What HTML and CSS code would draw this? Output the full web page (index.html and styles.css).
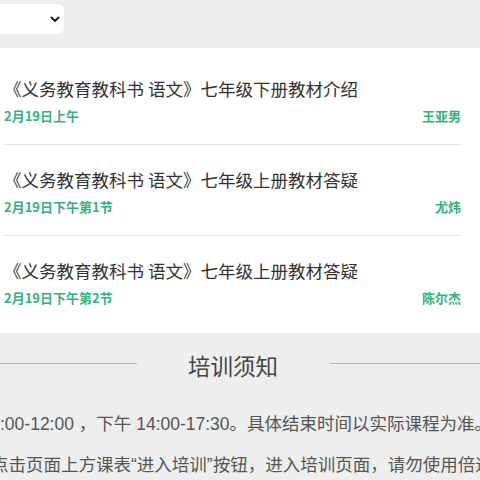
FILE: index.html
```html
<!DOCTYPE html>
<html lang="zh-CN">
<head>
	<meta charset="UTF-8" />
	<meta name="viewport" content="width=device-width, initial-scale=1.0"/>
	<title>培训课表</title>
	<link rel="stylesheet" href="styles.css">
</head>
<body>
<div class="page">
	<div class="select-box">
		<svg class="chevron" width="10" height="7" viewBox="0 0 10 7"><path d="M1.5 1.5 L5 5 L8.5 1.5" fill="none" stroke="#222" stroke-width="2" stroke-linecap="round" stroke-linejoin="round"/></svg>
	</div>

	<div class="course-card">
		<div class="course-row">
			<p class="course-title">《义务教育教科书 语文》七年级下册教材介绍</p>
			<div class="course-meta">
				<span>2月19日上午</span>
				<span>王亚男</span>
			</div>
		</div>
		<div class="course-row">
			<p class="course-title">《义务教育教科书 语文》七年级上册教材答疑</p>
			<div class="course-meta">
				<span>2月19日下午第1节</span>
				<span>尤炜</span>
			</div>
		</div>
		<div class="course-row last">
			<p class="course-title">《义务教育教科书 语文》七年级上册教材答疑</p>
			<div class="course-meta">
				<span>2月19日下午第2节</span>
				<span>陈尔杰</span>
			</div>
		</div>
	</div>

	<div class="section-head">
		<span class="line left"></span>
		<h3>培训须知</h3>
		<span class="line right"></span>
	</div>

	<p class="notice">:00-12:00 ，下午 14:00-17:30。具体结束时间以实际课程为准。</p>
	<p class="notice shifted">点击页面上方课表“进入培训”按钮，进入培训页面，请勿使用倍速</p>
</div>
</body>
</html>
```

FILE: styles.css
```css
html, body {
	margin: 0;
	height: 100%;
	overflow: hidden;
	background: #efeeee;
	font-family: "Noto Sans CJK SC", "Noto Sans", sans-serif;
}
.page {
	padding-top: 4px;
}
.select-box {
	width: 64px;
	height: 30px;
	background: #fff;
	border-radius: 0 6px 6px 0;
	display: flex;
	align-items: center;
	justify-content: flex-end;
	box-sizing: border-box;
}
.chevron {
	margin-right: 4px;
}
.course-card {
	margin-top: 14px;
	background: #fff;
	padding: 6px 0 7px;
}
.course-row {
	margin: 0 19px 0 4px;
	padding: 23px 0 20px;
	border-bottom: 1px solid #e2e2e2;
}
.course-row.last {
	border-bottom: none;
}
.course-title {
	margin: 0;
	font-size: 17.5px;
	line-height: 24px;
	color: #333;
	white-space: nowrap;
}
.course-meta {
	display: flex;
	justify-content: space-between;
	margin-top: 7px;
	font-size: 13px;
	line-height: 16px;
	font-weight: bold;
	color: #34b27d;
}
.section-head {
	display: flex;
	align-items: center;
	height: 64px;
}
.section-head h3 {
	margin: 0 52px 0 51px;
	font-size: 22.5px;
	font-weight: normal;
	color: #444;
	line-height: 30px;
}
.line {
	height: 1px;
	background: #b5b5b5;
	margin-top: -3px;
}
.line.left {
	width: 137px;
}
.line.right {
	flex: 1;
}
.notice {
	margin: 14px 0 0;
	font-family: "Liberation Sans", "Noto Sans CJK SC", sans-serif;
	font-size: 17.5px;
	line-height: 26px;
	color: #555;
	white-space: nowrap;
	overflow: hidden;
}
.notice.shifted {
	margin-top: 15px;
	text-indent: -9px;
}
```
